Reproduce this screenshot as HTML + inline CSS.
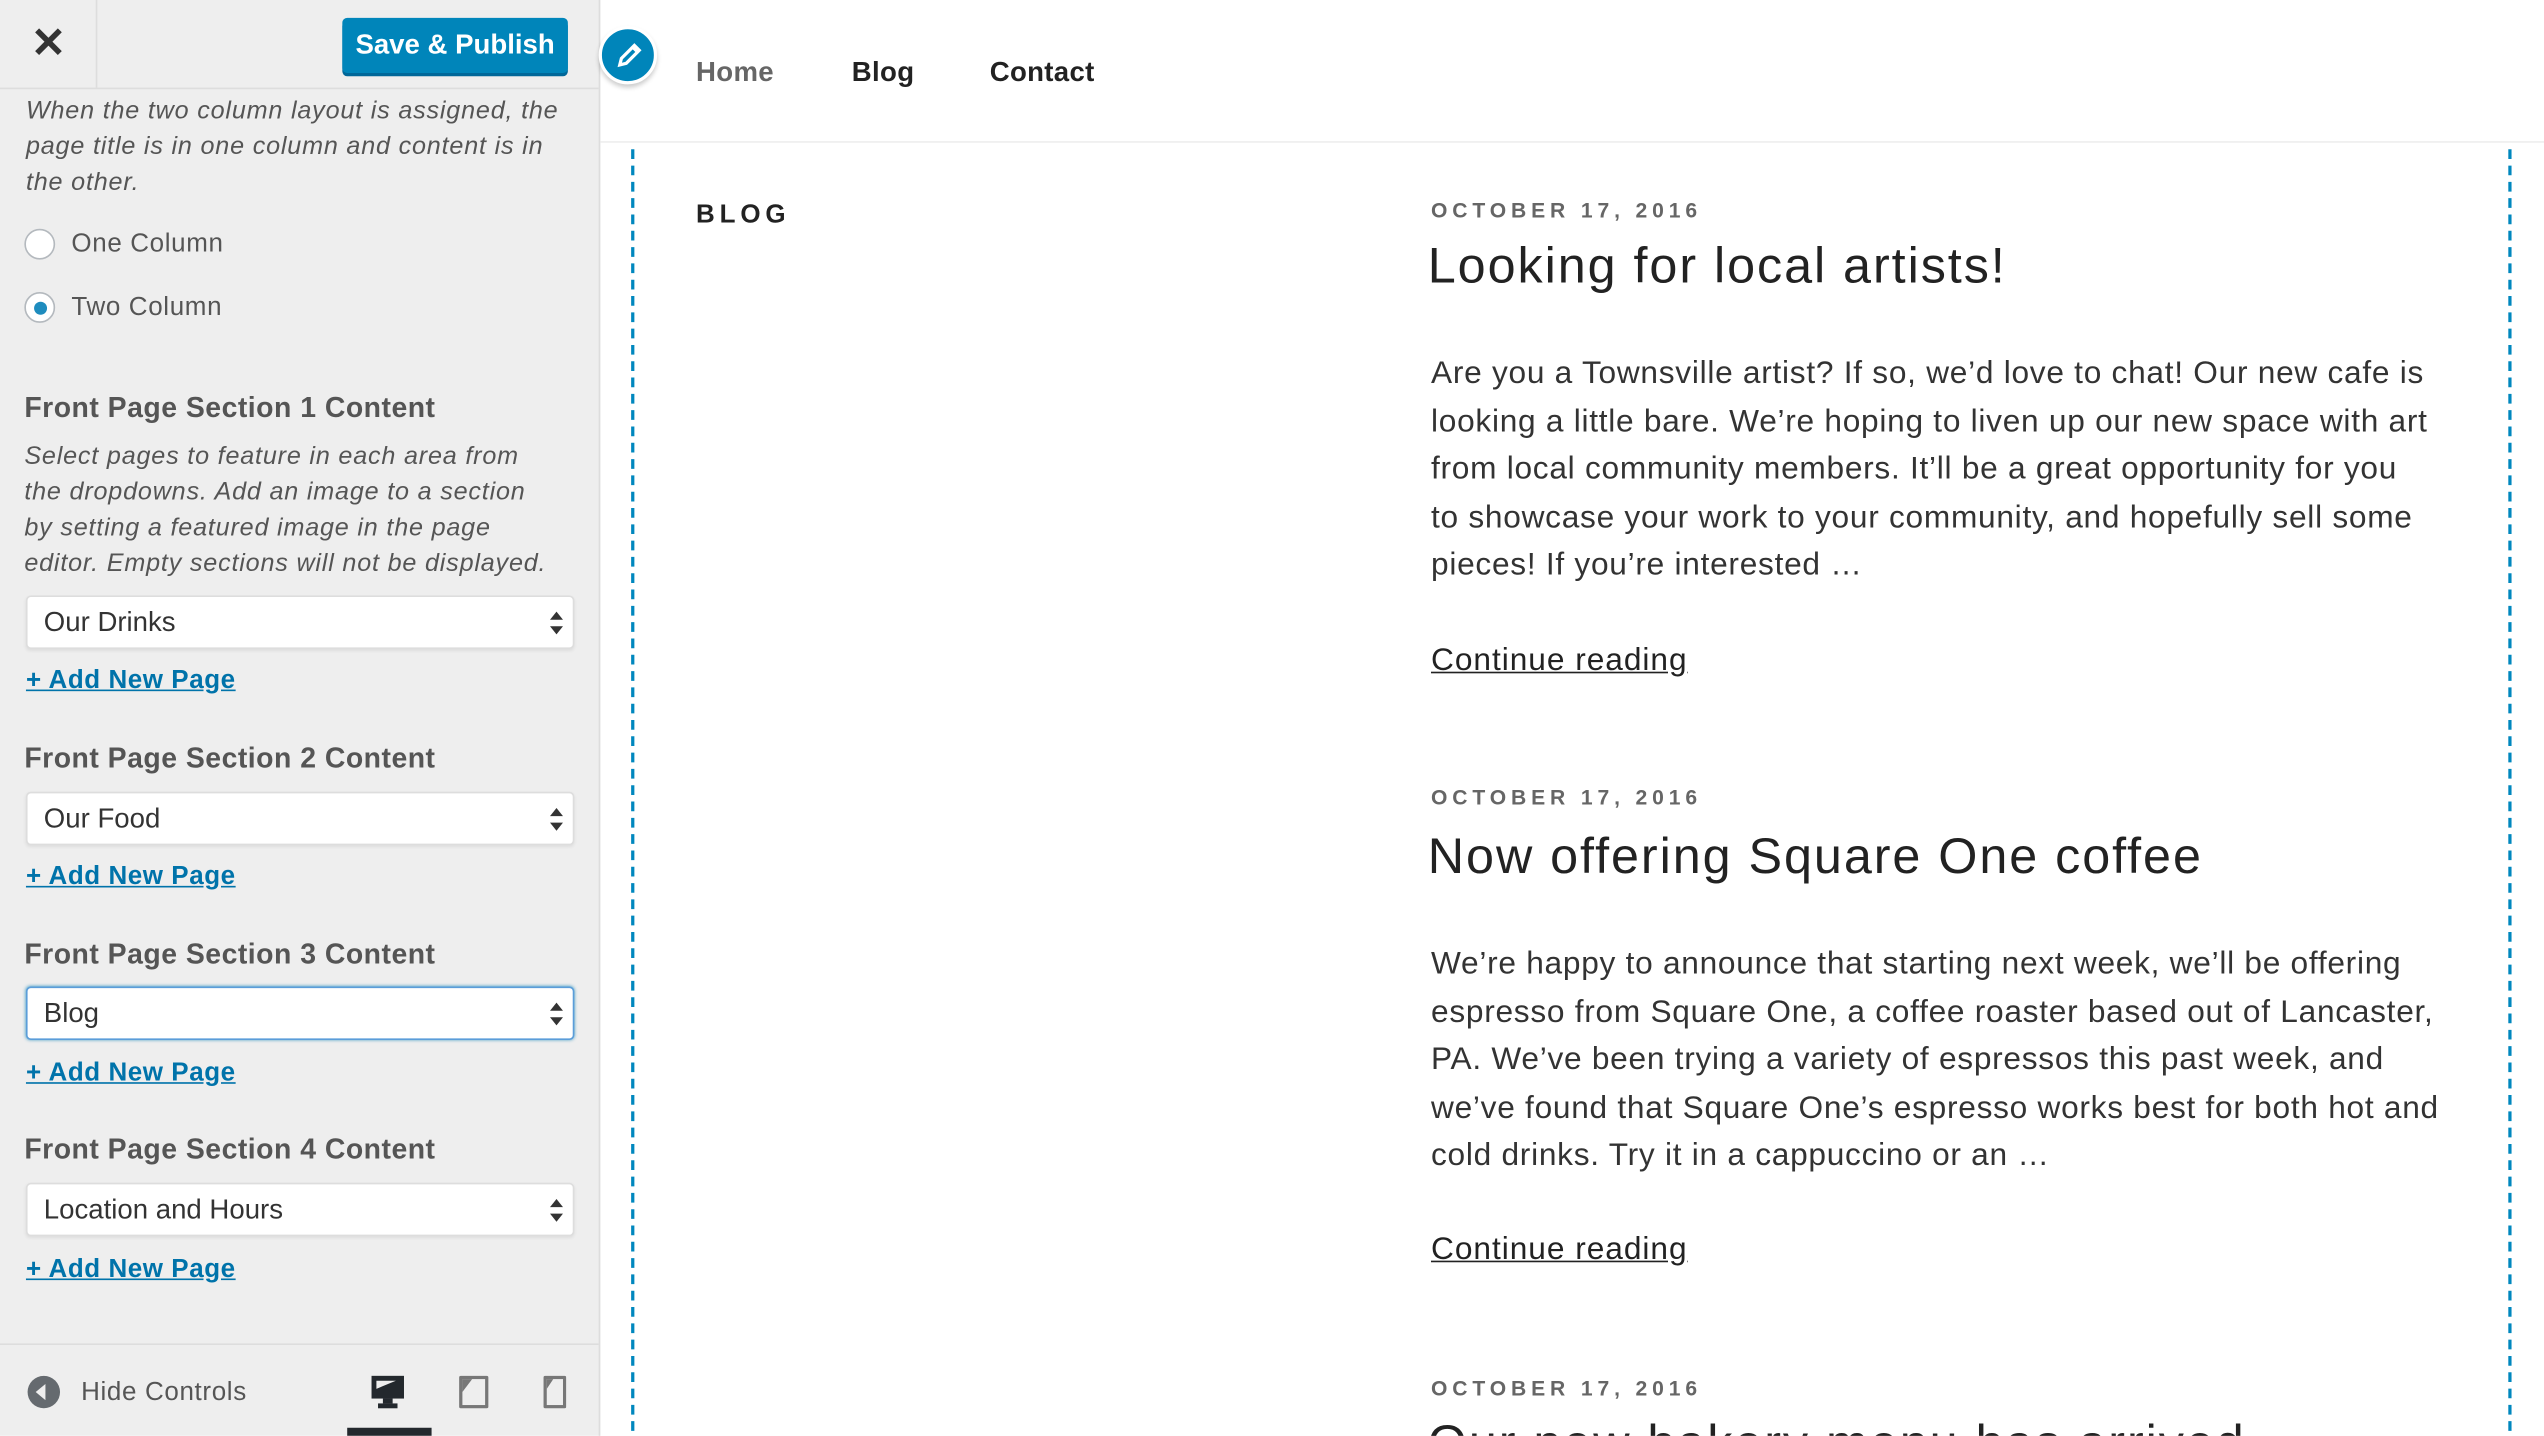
<!DOCTYPE html>
<html><head><meta charset="utf-8"><style>
html,body{margin:0;padding:0;width:2544px;height:1435px;overflow:hidden;background:#fff}
#w{position:absolute;left:0;top:0;width:1568px;height:885px;transform:scale(1.62245);transform-origin:0 0;font-family:"Liberation Sans",sans-serif;overflow:hidden}
.a{position:absolute;white-space:nowrap}
#side{position:absolute;left:0;top:0;width:369px;height:885px;background:#eee;border-right:1px solid #ddd}
.desc{font-style:italic;font-size:15.5px;color:#555;line-height:22px;letter-spacing:0.5px}
.h{font-size:17.5px;color:#555;font-weight:bold;letter-spacing:0.3px}
.sel{position:absolute;left:16px;width:338px;height:33px;background:#fff;border:1px solid #ddd;border-radius:3px;font-size:17px;color:#333;line-height:32px;box-sizing:border-box;padding-left:10px;box-shadow:0 1px 2px rgba(0,0,0,.07)}
.sel:after{content:"";position:absolute;right:6px;top:9px;border:4px solid transparent;border-bottom:5px solid #333;border-top:0}
.sel:before{content:"";position:absolute;right:6px;top:18px;border:4px solid transparent;border-top:5px solid #333;border-bottom:0}
.lnk{font-size:16px;color:#0073aa;text-decoration:underline;font-weight:bold;left:16px;letter-spacing:0.35px}
.radio{position:absolute;left:15px;width:19px;height:19px;border:1px solid #b4b9be;border-radius:50%;background:#fff;box-sizing:border-box}
.date{font-size:13px;font-weight:bold;color:#666;letter-spacing:3px;left:882px}
.tt{font-size:31px;color:#222;left:880px;letter-spacing:1.2px}
.p{left:882px;font-size:19.5px;color:#333;line-height:29.6px;letter-spacing:0.45px}
.cr{left:882px;font-size:19.5px;color:#222;text-decoration:underline;letter-spacing:0.6px}
</style></head><body><div id="w">
<div id="side">
 <div class="a" style="left:0;top:0;width:369px;height:54px;border-bottom:1px solid #ddd"></div>
 <div class="a" style="left:59px;top:0;width:1px;height:54px;background:#ddd"></div>
 <div class="a" style="left:19px;top:11px;font-size:26px;font-weight:bold;color:#333">&#x2715;</div>
 <div class="a" style="left:211px;top:11px;width:139px;height:34px;background:#0085ba;border-radius:3px;box-shadow:0 2px 0 #006799;color:#fff;font-size:17px;font-weight:bold;text-align:center;line-height:33px">Save &amp; Publish</div>
 <div class="a desc" style="left:16px;top:58px">When the two column layout is assigned, the<br>page title is in one column and content is in<br>the other.</div>
 <div class="radio" style="top:141px"></div>
 <div class="a" style="left:44px;top:142px;font-size:16px;color:#555;letter-spacing:0.4px">One Column</div>
 <div class="radio" style="top:180px"><div style="position:absolute;left:4.5px;top:4.5px;width:8px;height:8px;border-radius:50%;background:#1e8cbe"></div></div>
 <div class="a" style="left:44px;top:181px;font-size:16px;color:#555;letter-spacing:0.4px">Two Column</div>
 <div class="a h" style="left:15px;top:241px">Front Page Section 1 Content</div>
 <div class="a desc" style="left:15px;top:271px">Select pages to feature in each area from<br>the dropdowns. Add an image to a section<br>by setting a featured image in the page<br>editor. Empty sections will not be displayed.</div>
 <div class="sel" style="top:367px">Our Drinks</div>
 <div class="a lnk" style="top:411px">+ Add New Page</div>
 <div class="a h" style="left:15px;top:457px">Front Page Section 2 Content</div>
 <div class="sel" style="top:488px">Our Food</div>
 <div class="a lnk" style="top:532px">+ Add New Page</div>
 <div class="a h" style="left:15px;top:578px">Front Page Section 3 Content</div>
 <div class="sel" style="top:608px;border-color:#5b9dd9;box-shadow:0 0 2px rgba(30,140,190,.8)">Blog</div>
 <div class="a lnk" style="top:653px">+ Add New Page</div>
 <div class="a h" style="left:15px;top:698px">Front Page Section 4 Content</div>
 <div class="sel" style="top:729px">Location and Hours</div>
 <div class="a lnk" style="top:774px">+ Add New Page</div>
 <div class="a" style="left:0;top:828px;width:369px;height:1px;background:#ddd"></div>
 <div class="a" style="left:17px;top:848px;width:20px;height:20px;border-radius:50%;background:#656a6f"><div style="position:absolute;left:5px;top:5px;border:5px solid transparent;border-right:6px solid #eee;border-left:0"></div></div>
 <div class="a" style="left:50px;top:850px;font-size:16px;color:#555;letter-spacing:0.4px">Hide Controls</div>
 <svg class="a" style="left:228px;top:847px" width="24" height="22" viewBox="0 0 24 22"><rect x="1" y="1" width="20" height="14" fill="#23282d"/><path d="M4 4h12l-12 5z" fill="#eee"/><rect x="8" y="15" width="6" height="3" fill="#23282d"/><rect x="5" y="18" width="12" height="3" fill="#23282d"/></svg>
 <div class="a" style="left:214px;top:880px;width:52px;height:5px;background:#23282d"></div>
 <svg class="a" style="left:282px;top:847px" width="20" height="22" viewBox="0 0 20 22"><rect x="1" y="1" width="18" height="20" rx="1" fill="#777"/><rect x="3" y="3" width="14" height="16" fill="#eee"/><path d="M3 3h6l-6 8z" fill="#777"/></svg>
 <svg class="a" style="left:335px;top:847px" width="14" height="22" viewBox="0 0 14 22"><rect x="0" y="1" width="14" height="20" rx="1" fill="#777"/><rect x="2" y="3" width="10" height="16" fill="#eee"/><path d="M2 3h4l-4 6z" fill="#777"/></svg>
</div>
<div class="a" style="left:370px;top:87px;width:1198px;height:1px;background:#eee"></div>
<div class="a" style="left:369px;top:16px;width:32px;height:32px;border-radius:50%;background:#0085ba;border:2px solid #fff;box-shadow:0 2px 3px rgba(0,0,0,.2)">
<svg width="32" height="32" viewBox="0 0 32 32"><path d="M11 22l1-4 8-8 3 3-8 8z M19 11l3 3" fill="none" stroke="#fff" stroke-width="2"/></svg></div>
<div class="a" style="left:429px;top:35px;font-size:17px;color:#666;font-weight:bold;letter-spacing:0.2px">Home</div>
<div class="a" style="left:525px;top:35px;font-size:17px;color:#222;font-weight:bold;letter-spacing:0.2px">Blog</div>
<div class="a" style="left:610px;top:35px;font-size:17px;color:#222;font-weight:bold;letter-spacing:0.2px">Contact</div>
<div class="a" style="left:389px;top:92px;height:800px;border-left:2px dashed #0087be"></div>
<div class="a" style="left:1546px;top:92px;height:800px;border-left:2px dashed #0087be"></div>
<div class="a" style="left:429px;top:124px;font-size:16px;font-weight:bold;color:#222;letter-spacing:3px">BLOG</div>
<div class="a date" style="top:122px">OCTOBER 17, 2016</div>
<div class="a tt" style="top:146px">Looking for local artists!</div>
<div class="a p" style="top:216px">Are you a Townsville artist? If so, we’d love to chat! Our new cafe is<br>looking a little bare. We’re hoping to liven up our new space with art<br>from local community members. It’ll be a great opportunity for you<br>to showcase your work to your community, and hopefully sell some<br>pieces! If you’re interested …</div>
<div class="a cr" style="top:396px">Continue reading</div>
<div class="a date" style="top:484px">OCTOBER 17, 2016</div>
<div class="a tt" style="top:510px">Now offering Square One coffee</div>
<div class="a p" style="top:580px">We’re happy to announce that starting next week, we’ll be offering<br>espresso from Square One, a coffee roaster based out of Lancaster,<br>PA. We’ve been trying a variety of espressos this past week, and<br>we’ve found that Square One’s espresso works best for both hot and<br>cold drinks. Try it in a cappuccino or an …</div>
<div class="a cr" style="top:759px">Continue reading</div>
<div class="a date" style="top:848px">OCTOBER 17, 2016</div>
<div class="a tt" style="top:872px">Our new bakery menu has arrived</div>
</div></body></html>
